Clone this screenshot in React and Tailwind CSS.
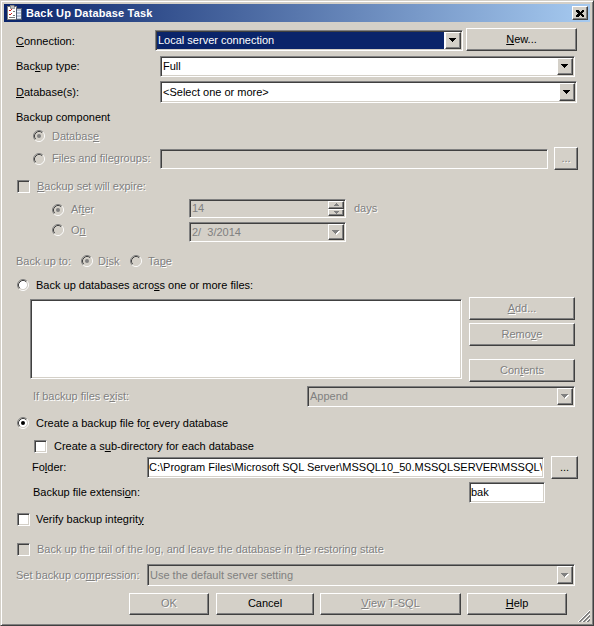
import React from "react";

const dis = "text-[#808080] [text-shadow:1px_1px_0_#fff]";
const sunken =
  "border border-t-[#808080] border-l-[#808080] border-b-white border-r-white shadow-[inset_1px_1px_0_#404040,inset_-1px_-1px_0_#d4d0c8] p-[1px]";
const raised =
  "border border-t-white border-l-white border-b-[#404040] border-r-[#404040] shadow-[inset_-1px_-1px_0_#808080] bg-[#d4d0c8]";

function Arrow({ disabled }) {
  const fill = disabled ? "#808080" : "#000";
  const rows = [
    [0, 7],
    [1, 5],
    [2, 3],
    [3, 1],
  ];
  return (
    <svg width="8" height="5" viewBox="0 0 8 5" shapeRendering="crispEdges">
      {disabled &&
        rows.map(([y, w], i) => (
          <rect key={"s" + i} x={i + 1} y={y + 1} width={w} height="1" fill="#fff" />
        ))}
      {rows.map(([y, w], i) => (
        <rect key={i} x={i} y={y} width={w} height="1" fill={fill} />
      ))}
    </svg>
  );
}

function DropBtn({ disabled }) {
  return (
    <div className={`${raised} w-[16px] h-full flex items-center justify-center shrink-0`}>
      <Arrow disabled={disabled} />
    </div>
  );
}

function Combo({ w, h, text, disabled, selected, className = "" }) {
  return (
    <div
      className={`${sunken} ${w} ${h} flex ${disabled ? "bg-[#d4d0c8]" : "bg-white"} ${className}`}
    >
      <div
        className={`flex-1 flex items-center pl-[1px] overflow-hidden whitespace-pre ${
          selected ? "bg-[#0a246a] text-white mr-[1px]" : disabled ? "text-[#808080]" : ""
        }`}
      >
        {text}
      </div>
      <DropBtn disabled={disabled} />
    </div>
  );
}

function Field({ w, h, text, disabled }) {
  return (
    <div
      className={`${sunken} ${w} ${h} flex items-center pl-[1px] overflow-hidden whitespace-nowrap ${
        disabled ? "bg-[#d4d0c8] text-[#808080]" : "bg-white"
      }`}
    >
      <span className="overflow-hidden whitespace-nowrap">{text}</span>
    </div>
  );
}

function Button({ w, h = "h-[23px]", children, disabled, className = "" }) {
  return (
    <div
      className={`${raised} ${w} ${h} flex items-center justify-center shrink-0 ${
        disabled ? dis : ""
      } ${className}`}
    >
      {children}
    </div>
  );
}

function Radio({ checked, disabled }) {
  const a = "M2.11 9.89A5.5 5.5 0 0 1 9.89 2.11";
  const b = "M9.89 2.11A5.5 5.5 0 0 1 2.11 9.89";
  const c = "M2.82 9.18A4.5 4.5 0 0 1 9.18 2.82";
  const d = "M9.18 2.82A4.5 4.5 0 0 1 2.82 9.18";
  return (
    <svg width="12" height="12" viewBox="0 0 12 12" className="shrink-0">
      <circle cx="6" cy="6" r="4.2" fill={disabled ? "#d4d0c8" : "#fff"} />
      <path d={a} stroke="#808080" fill="none" strokeWidth="1" />
      <path d={b} stroke="#fff" fill="none" strokeWidth="1" />
      <path d={c} stroke="#404040" fill="none" strokeWidth="1" />
      <path d={d} stroke="#d4d0c8" fill="none" strokeWidth="1" />
      {checked && <circle cx="6" cy="6" r="2" fill={disabled ? "#808080" : "#000"} />}
    </svg>
  );
}

function Check({ disabled }) {
  return (
    <div
      className={`w-[13px] h-[13px] shrink-0 border border-t-[#808080] border-l-[#808080] border-b-white border-r-white shadow-[inset_1px_1px_0_#404040,inset_-1px_-1px_0_#d4d0c8] ${
        disabled ? "bg-[#d4d0c8]" : "bg-white"
      }`}
    />
  );
}

function TitleIcon() {
  return (
    <svg width="16" height="16" viewBox="0 0 16 16" shapeRendering="crispEdges">
      <rect x="1.5" y="1.5" width="9" height="13" fill="#fff" stroke="#7a7a7a" />
      <rect x="4" y="0" width="4" height="3" fill="#c0c0c0" stroke="#606060" strokeWidth="0.6" />
      <path d="M3 5l1 1 2-2M3 9l1 1 2-2" stroke="#d02020" fill="none" />
      <path d="M7 6h2M7 10h2M3 12h6" stroke="#7a7a7a" />
      <rect x="10.5" y="3.5" width="5" height="11" fill="#b8c4d8" stroke="#505a70" />
      <path d="M11 6h4M11 9h4M11 12h4" stroke="#e8eef8" />
    </svg>
  );
}

function Grip() {
  return (
    <svg width="12" height="12" viewBox="0 0 12 12" shapeRendering="crispEdges">
      {[0, 4, 8].map((o) => (
        <g key={o}>
          <path d={`M${o} 12 L12 ${o}`} stroke="#fff" strokeWidth="1" />
          <path d={`M${1 + o} 12 L12 ${1 + o}`} stroke="#808080" strokeWidth="1" />
          <path d={`M${2 + o} 12 L12 ${2 + o}`} stroke="#808080" strokeWidth="1" />
        </g>
      ))}
    </svg>
  );
}

export default function App() {
  return (
    <div className="w-[594px] h-[626px] bg-[#d4d0c8] font-['Liberation_Sans',Arial,sans-serif] text-[11px] leading-[13px] text-black select-none">
      <div className="relative h-full border border-t-[#d4d0c8] border-l-[#d4d0c8] border-b-[#404040] border-r-[#404040] shadow-[inset_1px_1px_0_#fff,inset_-1px_-1px_0_#808080] p-[3px] flex flex-col">
        {/* caption bar */}
        <div className="h-[18px] shrink-0 flex items-center bg-[linear-gradient(to_right,#0a246a,#a6caf0)] pl-[2px] pr-[2px]">
          <TitleIcon />
          <span className="ml-[4px] font-bold text-white text-[11px] tracking-[0.15px]">
            Back Up Database Task
          </span>
          <div className="ml-auto w-[16px] h-[14px] border border-t-white border-l-white border-b-[#404040] border-r-[#404040] shadow-[inset_-1px_-1px_0_#808080] bg-[#d4d0c8] flex items-center justify-center">
            <svg width="8" height="7" viewBox="0 0 8 7" shapeRendering="crispEdges">
              <path d="M0 0h2l2 2 2-2h2v1L6 3.5 8 6v1H6L4 5 2 7H0V6l2-2.5L0 1z" fill="#000" />
            </svg>
          </div>
        </div>

        {/* Connection */}
        <div className="mt-[6px] h-[23px] flex items-center pl-[12px]">
          <span className="w-[139px] translate-y-[2px]">
            <u>C</u>onnection:
          </span>
          <Combo
            w="w-[308px]"
            h="h-[21px]"
            text="Local server connection"
            selected
            className="self-end"
          />
          <Button w="w-[111px]" className="ml-[3px]">
            <u>N</u>ew...
          </Button>
        </div>

        {/* Backup type */}
        <div className="mt-[5px] h-[21px] flex items-center pl-[12px]">
          <span className="w-[144px]">
            Bac<u>k</u>up type:
          </span>
          <Combo w="w-[415px]" h="h-[21px]" text="Full" />
        </div>

        {/* Databases */}
        <div className="mt-[4px] h-[22px] flex items-center pl-[12px]">
          <span className="w-[144px]">
            <u>D</u>atabase(s):
          </span>
          <Combo w="w-[417px]" h="h-[22px]" text="<Select one or more>" />
        </div>

        {/* Backup component */}
        <div className="mt-[7px] h-[14px] flex items-center pl-[12px]">Backup component</div>
        <div className="mt-[5px] h-[14px] flex items-center pl-[29px]">
          <Radio checked disabled />
          <span className={`ml-[7px] ${dis}`}>
            Databas<u>e</u>
          </span>
        </div>
        <div className="mt-[4px] h-[23px] flex items-center pl-[29px]">
          <Radio disabled />
          <span className={`ml-[7px] w-[108px] ${dis}`}>
            Files and file<u>g</u>roups:
          </span>
          <Field w="w-[388px]" h="h-[20px]" disabled />
          <Button w="w-[24px]" disabled className="ml-[6px]">
            ...
          </Button>
        </div>

        {/* Expiry */}
        <div className="mt-[9px] h-[14px] flex items-center pl-[13px]">
          <Check disabled />
          <span className={`ml-[7px] ${dis}`}>
            <u>B</u>ackup set will expire:
          </span>
        </div>
        <div className="mt-[6px] h-[19px] flex items-center pl-[48px]">
          <div className="flex items-center translate-y-[1px]">
            <Radio checked disabled />
            <span className={`ml-[7px] w-[118px] ${dis}`}>
              Af<u>t</u>er
            </span>
          </div>
          <div className={`${sunken} w-[157px] h-[19px] flex bg-[#d4d0c8]`}>
            <div className="flex-1 flex items-center pl-[1px] text-[#808080]">14</div>
            <div className="w-[16px] h-full flex flex-col shrink-0">
              <div className={`${raised} flex-1 flex items-center justify-center`}>
                <svg width="5" height="3" viewBox="0 0 5 3" shapeRendering="crispEdges">
                  <path d="M2 0h1v1h1v1h1v1H0V2h1V1h1z" fill="#808080" />
                </svg>
              </div>
              <div className={`${raised} flex-1 flex items-center justify-center`}>
                <svg width="5" height="3" viewBox="0 0 5 3" shapeRendering="crispEdges">
                  <path d="M0 0h5v1H4v1H3v1H2V2H1V1H0z" fill="#808080" />
                </svg>
              </div>
            </div>
          </div>
          <span className={`ml-[8px] ${dis}`}>days</span>
        </div>
        <div className="mt-[4px] h-[20px] flex items-center pl-[48px]">
          <div className="self-start mt-[1px] flex items-center h-[14px]">
            <Radio disabled />
            <span className={`ml-[7px] w-[118px] ${dis}`}>
              O<u>n</u>
            </span>
          </div>
          <Combo w="w-[157px]" h="h-[20px]" text="2/  3/2014" disabled />
        </div>

        {/* Destination */}
        <div className={`mt-[12px] h-[14px] flex items-center pl-[12px] ${dis}`}>
          <span className="w-[65px]">Back up to:</span>
          <Radio checked disabled />
          <span className="ml-[5px] w-[32px]">
            D<u>i</u>sk
          </span>
          <Radio disabled />
          <span className="ml-[6px]">
            Ta<u>p</u>e
          </span>
        </div>

        <div className="mt-[10px] h-[14px] flex items-center pl-[13px]">
          <Radio />
          <span className="ml-[7px]">
            Back up databases acro<u>s</u>s one or more files:
          </span>
        </div>

        <div className="mt-[5px] h-[85px] flex items-start pl-[26px]">
          <div className={`${sunken} mt-[2px] w-[432px] h-[80px] bg-white`} />
          <div className="ml-[7px] flex flex-col">
            <Button w="w-[106px]" disabled>
              <u>A</u>dd...
            </Button>
            <Button w="w-[106px]" disabled className="mt-[3px]">
              Remo<u>v</u>e
            </Button>
            <Button w="w-[106px]" disabled className="mt-[13px]">
              Con<u>t</u>ents
            </Button>
          </div>
        </div>

        <div className="mt-[4px] h-[21px] flex items-center pl-[29px]">
          <span className={`w-[274px] ${dis}`}>
            If backup files e<u>x</u>ist:
          </span>
          <Combo w="w-[268px]" h="h-[21px]" text="Append" disabled />
        </div>

        {/* Per-database files */}
        <div className="mt-[9px] h-[14px] flex items-center pl-[13px]">
          <Radio checked />
          <span className="ml-[7px]">
            Create a backup file fo<u>r</u> every database
          </span>
        </div>
        <div className="mt-[9px] h-[14px] flex items-center pl-[30px]">
          <Check />
          <span className="ml-[7px]">
            Create a s<u>u</u>b-directory for each database
          </span>
        </div>
        <div className="mt-[3px] h-[23px] flex items-center pl-[28px]">
          <span className="w-[115px]">
            Fo<u>l</u>der:
          </span>
          <Field
            w="w-[397px]"
            h="h-[21px]"
            text="C:\Program Files\Microsoft SQL Server\MSSQL10_50.MSSQLSERVER\MSSQL\Backup"
          />
          <Button w="w-[27px]" className="ml-[7px]">
            ...
          </Button>
        </div>
        <div className="mt-[3px] h-[21px] flex items-center pl-[29px]">
          <span className="w-[436px]">
            Backup file extensi<u>o</u>n:
          </span>
          <Field w="w-[76px]" h="h-[21px]" text="bak" />
        </div>

        <div className="mt-[9px] h-[14px] flex items-center pl-[13px]">
          <Check />
          <span className="ml-[6px]">
            Verify backup integrit<u>y</u>
          </span>
        </div>

        <div className="mt-[16px] h-[14px] flex items-center pl-[13px]">
          <Check disabled />
          <span className={`ml-[7px] ${dis}`}>
            Back up the tail of the log, and leave the database in t<u>h</u>e restoring state
          </span>
        </div>

        <div className="mt-[8px] h-[22px] flex items-center pl-[12px]">
          <span className={`w-[131px] ${dis}`}>
            Set backup co<u>m</u>pression:
          </span>
          <Combo w="w-[428px]" h="h-[22px]" text="Use the default server setting" disabled />
        </div>

        {/* Dialog buttons */}
        <div className="mt-[6px] h-[23px] flex items-center pl-[125px]">
          <Button w="w-[80px]" h="h-[22px]" disabled>
            OK
          </Button>
          <Button w="w-[98px]" h="h-[22px]" className="ml-[7px]">
            Cancel
          </Button>
          <Button w="w-[141px]" h="h-[22px]" disabled className="ml-[6px]">
            <u>V</u>iew T-SQL
          </Button>
          <Button w="w-[100px]" h="h-[22px]" className="ml-[6px]">
            <u>H</u>elp
          </Button>
        </div>

        <div className="absolute right-[3px] bottom-[3px]">
          <Grip />
        </div>
      </div>
    </div>
  );
}
